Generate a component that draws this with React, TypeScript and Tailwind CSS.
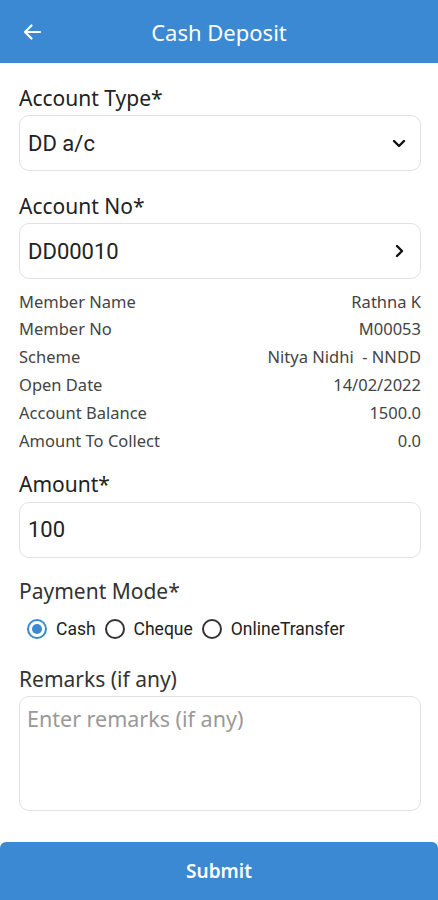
import React from "react";

const info: [string, string][] = [
  ["Member Name", "Rathna K"],
  ["Member No", "M00053"],
  ["Scheme", "Nitya Nidhi  - NNDD"],
  ["Open Date", "14/02/2022"],
  ["Account Balance", "1500.0"],
  ["Amount To Collect", "0.0"],
];

function Radio({ checked, label }: { checked?: boolean; label: string }) {
  return (
    <div className="flex items-center gap-[9px]">
      <div
        className={
          "w-[20px] h-[20px] rounded-full border-2 flex items-center justify-center " +
          (checked ? "border-[#3a89d2]" : "border-[#333]")
        }
      >
        {checked && <div className="w-[10px] h-[10px] rounded-full bg-[#3a89d2]" />}
      </div>
      <span className="text-[17.5px] text-[#222] font-['Roboto',sans-serif]">{label}</span>
    </div>
  );
}

export default function App() {
  return (
    <div className="w-[438px] h-[900px] bg-white flex flex-col font-['Noto_Sans',sans-serif] text-[#222]">
      <div className="h-[63px] bg-[#3a89d2] flex items-center relative shrink-0">
        <svg className="absolute left-[22px] top-[23px]" width="20" height="18" viewBox="0 0 20 18" fill="none">
          <path d="M18 9H3M9.5 2.5L3 9l6.5 6.5" stroke="white" strokeWidth="2.2" strokeLinecap="round" strokeLinejoin="round" />
        </svg>
        <div className="w-full text-center text-white text-[22px] leading-none">Cash Deposit</div>
      </div>

      <div className="pl-[19px] pr-[17px] flex flex-col flex-1">
        <div className="text-[21px] leading-[26px] mt-[22px]">Account Type*</div>
        <div className="mt-[4px] h-[56px] border border-[#e2e2e2] rounded-[10px] flex items-center justify-between pl-[8px] pr-[14px]">
          <span className="text-[22px] font-['Roboto',sans-serif]">DD a/c</span>
          <svg width="14" height="9" viewBox="0 0 14 9" fill="none">
            <path d="M2 2l5 5 5-5" stroke="#111" strokeWidth="2.4" strokeLinecap="round" strokeLinejoin="round" />
          </svg>
        </div>

        <div className="text-[21px] leading-[26px] mt-[22px]">Account No*</div>
        <div className="mt-[4px] h-[56px] border border-[#e2e2e2] rounded-[10px] flex items-center justify-between pl-[8px] pr-[16px]">
          <span className="text-[22px] font-['Roboto',sans-serif]">DD00010</span>
          <svg width="9" height="14" viewBox="0 0 9 14" fill="none">
            <path d="M2 2l5 5-5 5" stroke="#111" strokeWidth="2.4" strokeLinecap="round" strokeLinejoin="round" />
          </svg>
        </div>

        <div className="mt-[9px] flex flex-col">
          {info.map(([k, v]) => (
            <div key={k} className="flex justify-between h-[27.8px] items-center text-[16.5px] text-[#444]">
              <span>{k}</span>
              <span className="whitespace-pre">{v}</span>
            </div>
          ))}
        </div>

        <div className="text-[21px] leading-[26px] mt-[16px]">Amount*</div>
        <div className="mt-[5px] h-[56px] border border-[#e2e2e2] rounded-[10px] flex items-center pl-[8px]">
          <span className="text-[22px] font-['Roboto',sans-serif]">100</span>
        </div>

        <div className="text-[21px] leading-[26px] mt-[20px] text-[#333]">Payment Mode*</div>
        <div className="mt-[12px] flex items-center gap-[9px] pl-[8px]">
          <Radio checked label="Cash" />
          <Radio label="Cheque" />
          <Radio label="OnlineTransfer" />
        </div>

        <div className="text-[21px] leading-[26px] mt-[24px] text-[#333]">Remarks (if any)</div>
        <div className="mt-[4px] h-[115px] border border-[#e2e2e2] rounded-[10px] pl-[7px] pt-[6px]">
          <span className="text-[21.5px] text-[#999]">Enter remarks (if any)</span>
        </div>
      </div>

      <div className="h-[58px] bg-[#3a89d2] rounded-t-[6px] flex items-center justify-center shrink-0">
        <span className="text-white text-[19px] font-semibold">Submit</span>
      </div>
    </div>
  );
}
